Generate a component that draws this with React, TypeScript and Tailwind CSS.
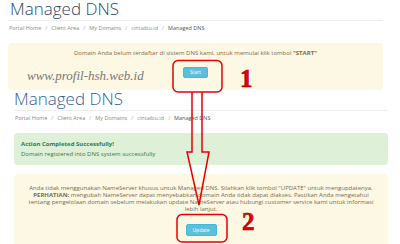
import React from "react";

function Breadcrumb() {
  const items = ["Portal Home", "Client Area", "My Domains", "cintaibu.id"];
  return (
    <div className="mt-[4px] h-[7px] leading-[7px] text-[5.5px] text-[#8a8a8a] whitespace-nowrap flex pl-[1px]">
      {items.map((t) => (
        <React.Fragment key={t}>
          <span>{t}</span>
          <span className="px-[4px] text-[#b0b0b0]">/</span>
        </React.Fragment>
      ))}
      <span className="text-[#555]">Managed DNS</span>
    </div>
  );
}

export default function App() {
  return (
    <div className="relative w-[400px] h-[244px] overflow-hidden bg-white font-['Open_Sans',sans-serif]">
      {/* first screenshot */}
      <section className="h-[90px] overflow-hidden ml-[8px] w-[375px]">
        <h1 className="pl-[2px] pb-[3px] border-b border-[#eeeeee] text-[17px] leading-[17px] font-light text-[#2c4668] whitespace-nowrap">
          Managed DNS
        </h1>
        <Breadcrumb />
        <div className="mt-[11px] h-[47px] rounded-[4px] bg-[#fcf8e3] pt-[6px] flex flex-col items-center">
          <p className="text-[6px] leading-[8px] text-[#7f6b4d] whitespace-nowrap">
            Domain Anda belum terdaftar di sistem DNS kami, untuk memulai klik tombol <b>"START"</b>
          </p>
          <button className="mt-[10px] w-[25px] h-[11px] rounded-[2px] bg-[#5bc0de] border border-[#46b8da] text-white text-[5px] leading-[9px]">
            Start
          </button>
        </div>
      </section>

      {/* second screenshot */}
      <section className="ml-[14px] w-[374px]">
        <h1 className="pb-[3px] border-b border-[#eeeeee] text-[17px] leading-[17px] font-light text-[#336296] whitespace-nowrap">
          Managed DNS
        </h1>
        <Breadcrumb />
        <div className="mt-[11px] h-[32px] rounded-[4px] bg-[#dff0d8] px-[7px] pt-[6px] text-[6px] leading-[10px] text-[#3c763d] whitespace-nowrap">
          <p className="font-bold">Action Completed Successfully!</p>
          <p>Domain registered into DNS system successfully</p>
        </div>
        <div className="mt-[9px] h-[80px] rounded-[4px] bg-[#fcf8e3] pt-[11px] flex flex-col items-center">
          <div className="text-[6px] leading-[7px] text-[#7f6b4d] text-center whitespace-nowrap">
            <p>Anda tidak menggunakan NameServer khusus untuk Managed DNS. Silahkan klik tombol "UPDATE" untuk mengupdatenya.</p>
            <p>
              <b>PERHATIAN:</b> mengubah NameServer dapat menyebabkan domain Anda tidak dapat diakses. Pastikan Anda mengetahui
            </p>
            <p>tentang pengelolaan domain sebelum melakukan update NameServer atau hubungi customer service kami untuk informasi</p>
            <p>lebih lanjut.</p>
          </div>
          <button className="mt-[11px] w-[31px] h-[12px] rounded-[2px] bg-[#5bc0de] border border-[#46b8da] text-white text-[5px] leading-[10px]">
            Update
          </button>
        </div>
      </section>

      {/* watermark */}
      <span className="absolute left-[27px] top-[69px] text-[13px] leading-[13px] italic text-[#777] font-['Liberation_Serif',serif] whitespace-nowrap">
        www.profil-hsh.web.id
      </span>

      {/* annotations */}
      <svg className="absolute left-0 top-0 pointer-events-none" width="400" height="244" viewBox="0 0 400 244">
        <rect x="173" y="60.5" width="49" height="31.5" rx="5" fill="none" stroke="#e60000" strokeWidth="1.5" />
        <path
          d="M192 92 L192 152 L187 152 L199 205 L209 152 L202 152 L202 92"
          fill="none"
          stroke="#e60000"
          strokeWidth="1.5"
          strokeLinejoin="miter"
        />
        <rect x="177" y="214.5" width="50" height="27.5" rx="5" fill="none" stroke="#e60000" strokeWidth="1.5" />
      </svg>
      <span className="absolute left-[240px] top-[66px] text-[25px] leading-[25px] font-bold text-[#ee0000] font-['Liberation_Serif',serif] [-webkit-text-stroke:0.6px_#8b0000]">
        1
      </span>
      <span className="absolute left-[242px] top-[209px] text-[25px] leading-[25px] font-bold text-[#ee0000] font-['Liberation_Serif',serif] [-webkit-text-stroke:0.6px_#8b0000]">
        2
      </span>
    </div>
  );
}
